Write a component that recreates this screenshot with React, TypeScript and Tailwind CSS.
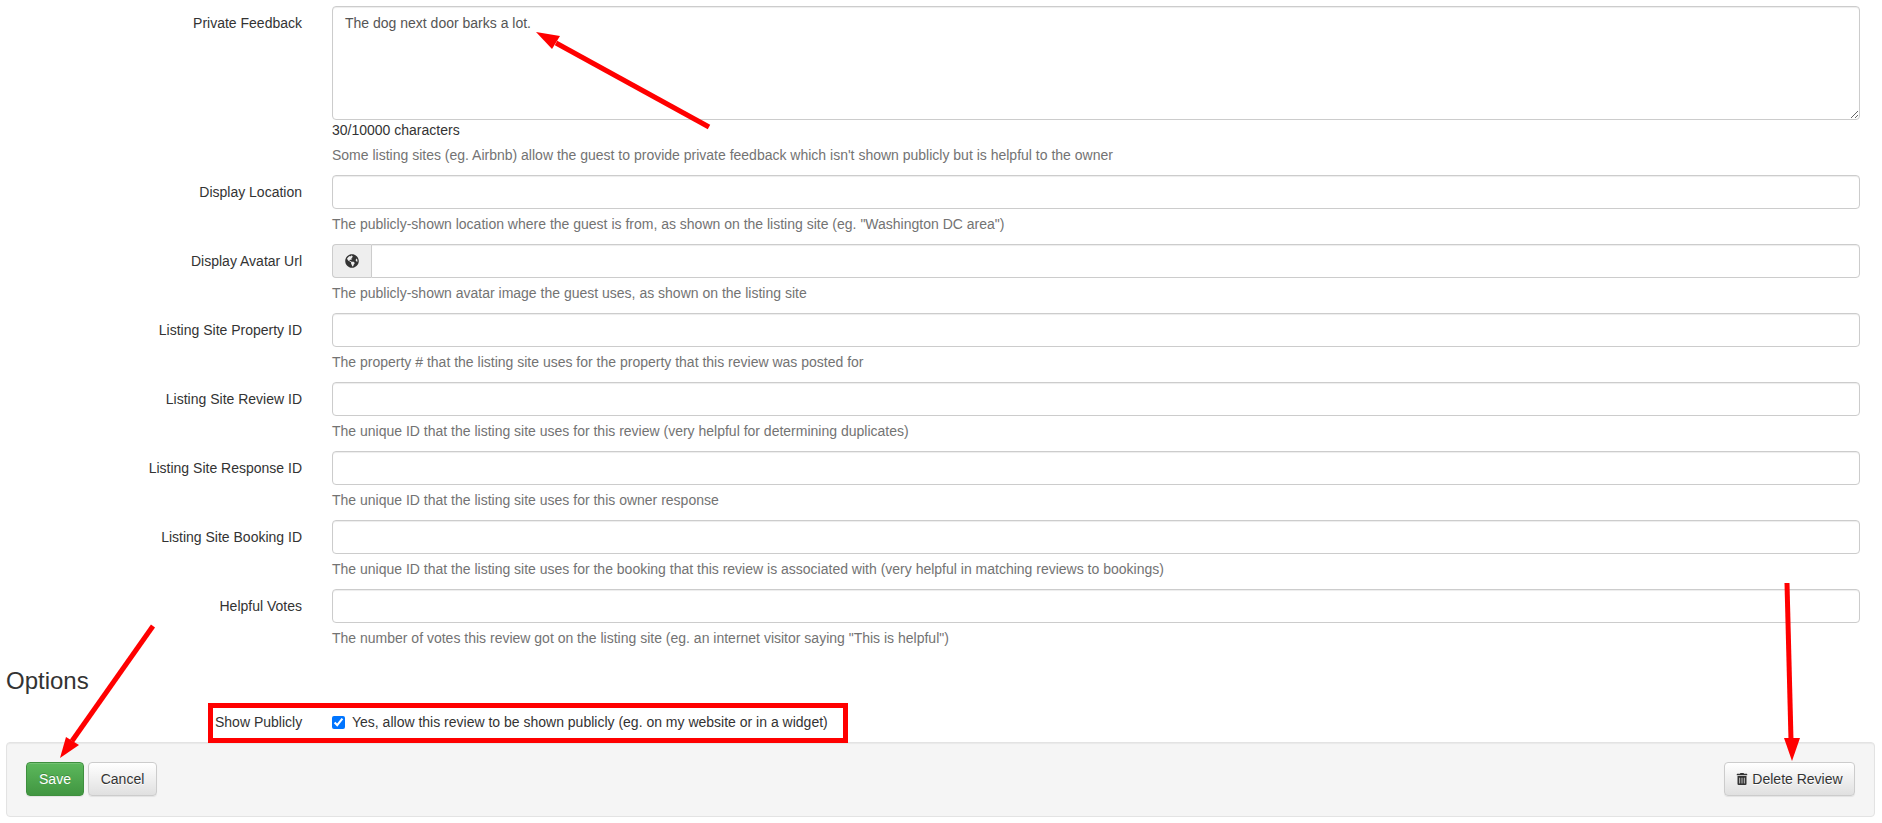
import { FaGlobeAmericas, FaTrashAlt } from "react-icons/fa";

interface FieldProps {
    label: string;
    help: string;
    addon?: boolean;
}

const fields: FieldProps[] = [
    {
        label: "Display Location",
        help: 'The publicly-shown location where the guest is from, as shown on the listing site (eg. "Washington DC area")',
    },
    {
        label: "Display Avatar Url",
        help: "The publicly-shown avatar image the guest uses, as shown on the listing site",
        addon: true,
    },
    {
        label: "Listing Site Property ID",
        help: "The property # that the listing site uses for the property that this review was posted for",
    },
    {
        label: "Listing Site Review ID",
        help: "The unique ID that the listing site uses for this review (very helpful for determining duplicates)",
    },
    {
        label: "Listing Site Response ID",
        help: "The unique ID that the listing site uses for this owner response",
    },
    {
        label: "Listing Site Booking ID",
        help: "The unique ID that the listing site uses for the booking that this review is associated with (very helpful in matching reviews to bookings)",
    },
    {
        label: "Helpful Votes",
        help: 'The number of votes this review got on the listing site (eg. an internet visitor saying "This is helpful")',
    },
];

function Label({ children }: { children: string }) {
    return <label className="w-[302px] shrink-0 pt-[7px] text-right text-[#333]">{children}</label>;
}

function Help({ children }: { children: string }) {
    return <p className="mt-[5px] mb-[10px] text-[#737373]">{children}</p>;
}

function Field({ label, help, addon }: FieldProps) {
    return (
        <div className="flex gap-[30px]">
            <Label>{label}</Label>
            <div className="min-w-0 flex-1">
                {addon ? (
                    <div className="flex h-[34px]">
                        <span className="flex w-[39px] shrink-0 items-center justify-center rounded-l border border-r-0 border-[#ccc] bg-[#eee] text-[#333]">
                            <FaGlobeAmericas size={14} />
                        </span>
                        <input
                            type="text"
                            className="min-w-0 flex-1 rounded-r border border-[#ccc] bg-white px-3 shadow-[inset_0_1px_1px_rgba(0,0,0,0.075)]"
                        />
                    </div>
                ) : (
                    <input
                        type="text"
                        className="block h-[34px] w-full rounded border border-[#ccc] bg-white px-3 shadow-[inset_0_1px_1px_rgba(0,0,0,0.075)]"
                    />
                )}
                <Help>{help}</Help>
            </div>
        </div>
    );
}

const defaultBtn =
    "h-[34px] rounded border border-[#ccc] bg-linear-to-b from-white to-[#e0e0e0] text-[#333] [text-shadow:0_1px_0_#fff] shadow-[inset_0_1px_0_rgba(255,255,255,0.15),0_1px_1px_rgba(0,0,0,0.075)]";

export default function App() {
    return (
        <div className="relative h-[823px] overflow-hidden bg-white pt-[6px] font-['Liberation_Sans',Arial,sans-serif] text-sm leading-5">
            <div className="pr-[22px]">
                <div className="flex gap-[30px]">
                    <Label>Private Feedback</Label>
                    <div className="min-w-0 flex-1">
                        <textarea
                            readOnly
                            defaultValue="The dog next door barks a lot."
                            className="block h-[114px] w-full rounded border border-[#ccc] bg-white px-3 py-[6px] text-[#555] shadow-[inset_0_1px_1px_rgba(0,0,0,0.075)]"
                        />
                        <div className="text-[#333]">30/10000 characters</div>
                        <Help>
                            Some listing sites (eg. Airbnb) allow the guest to provide private feedback which isn't shown publicly but is helpful to the owner
                        </Help>
                    </div>
                </div>
                {fields.map((field) => (
                    <Field key={field.label} {...field} />
                ))}
            </div>

            <h3 className="mt-[10px] ml-[6px] text-2xl leading-[26px] text-[#333]">Options</h3>

            <div className="mt-[18px] flex h-[20px] items-center pl-[215px] text-[#333]">
                <span className="w-[117px] shrink-0">Show Publicly</span>
                <input type="checkbox" defaultChecked className="m-0 size-[13px]" />
                <span className="ml-[7px]">Yes, allow this review to be shown publicly (eg. on my website or in a widget)</span>
            </div>

            <div className="mt-[10px] mr-[7px] ml-[6px] flex h-[75px] items-start justify-between rounded border border-[#e3e3e3] bg-[#f5f5f5] px-[19px] pt-[19px] shadow-[inset_0_1px_1px_rgba(0,0,0,0.05)]">
                <div className="flex gap-[4px]">
                    <button
                        type="button"
                        className="h-[34px] w-[58px] rounded border border-[#3e8f3e] bg-linear-to-b from-[#5cb85c] to-[#419641] text-white [text-shadow:0_-1px_0_rgba(0,0,0,0.2)] shadow-[inset_0_1px_0_rgba(255,255,255,0.15),0_1px_1px_rgba(0,0,0,0.075)]"
                    >
                        Save
                    </button>
                    <button type="button" className={`${defaultBtn} w-[69px]`}>
                        Cancel
                    </button>
                </div>
                <button type="button" className={`${defaultBtn} flex w-[131px] items-center justify-center gap-[4px]`}>
                    <FaTrashAlt size={12} />
                    Delete Review
                </button>
            </div>

            {/* red annotations drawn on top of the screenshot */}
            <div className="pointer-events-none absolute top-[703px] left-[208px] h-[40px] w-[640px] border-[5px] border-[#f00]" />
            <svg className="pointer-events-none absolute inset-0 h-full w-full" viewBox="0 0 1882 823" fill="none">
                <g stroke="#f00" strokeWidth={5}>
                    <path d="M709 127 L556 43" />
                    <path d="M153 626 L72 741" />
                    <path d="M1787 583 L1791 740" />
                </g>
                <g fill="#f00">
                    <path d="M536 32 L560 36 L552 49 Z" />
                    <path d="M60 758 L66 737 L79 745 Z" />
                    <path d="M1792 761 L1784 738 L1800 738 Z" />
                </g>
            </svg>
        </div>
    );
}
